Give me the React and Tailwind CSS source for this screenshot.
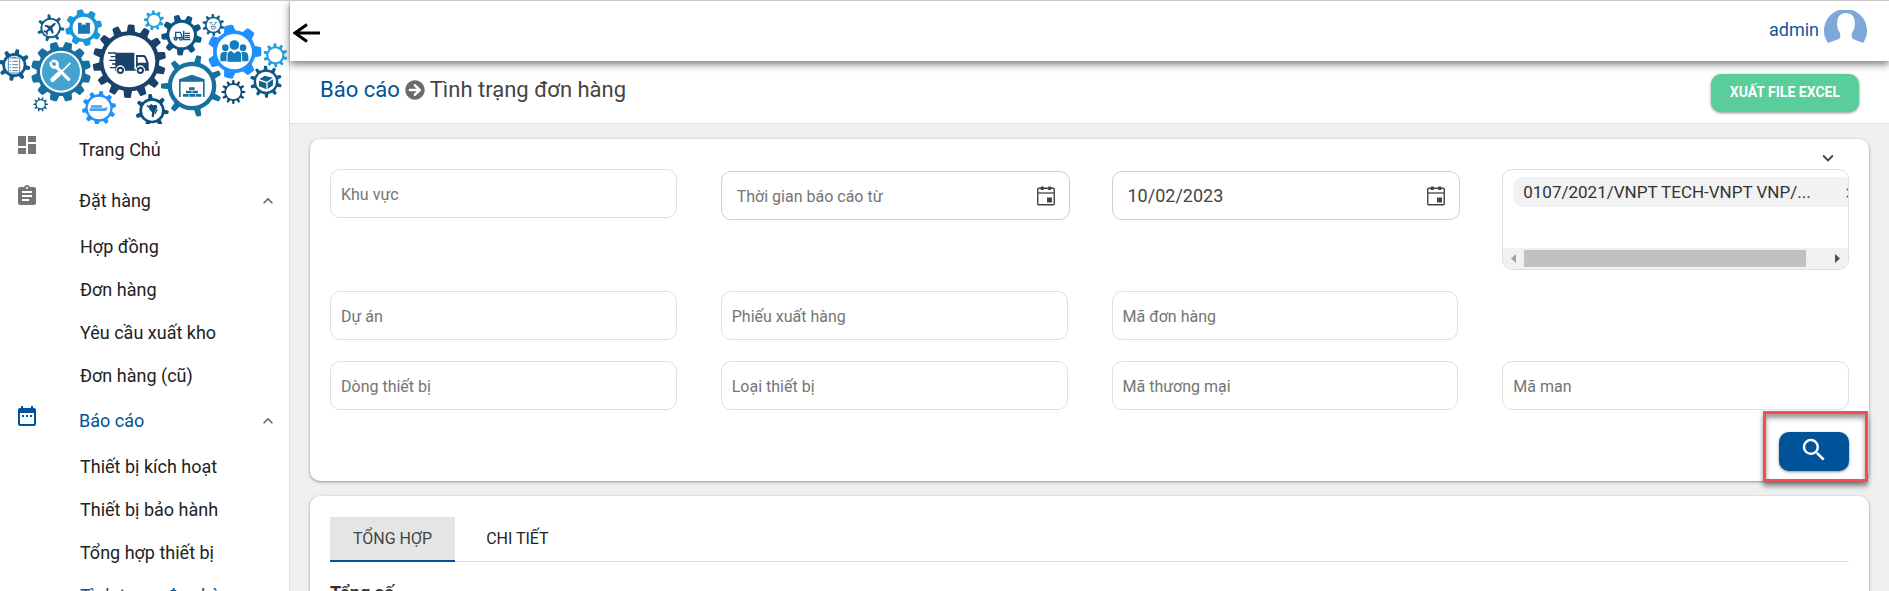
import { MdAssignment, MdClose, MdDashboard, MdDateRange, MdExpandLess, MdExpandMore, MdSearch } from "react-icons/md";
import { FaArrowCircleRight } from "react-icons/fa";

/* cx, cy, outer radius, ring radius, hole radius, teeth, phase in degrees, tooth width, colour */
const GEARS = [
  [43, 195, 48, 36, 28, 8, -78, 12, "#0e5a8a"],
  [152, 84, 41, 31, 25, 7, -98, 9, "#10628f"],
  [251, 83, 55, 43, 33, 8, -103, 20, "#1798dc"],
  [183, 215, 90, 73, 63, 12, 15, 24, "#17709f"],
  [122, 313, 22, 16, 12, 10, 0, 5, "#0f5a85"],
  [388, 184, 110, 90, 78, 14, -87, 22, "#1a416a"],
  [297, 324, 51, 41, 34, 10, -82, 13, "#1e90ff"],
  [462, 61, 30, 22, 17, 9, -95, 9, "#2a9fdc"],
  [545, 105, 61, 46, 37, 9, -105, 18, "#0b5583"],
  [640, 75, 33, 25, 20, 10, -93, 8, "#14618d"],
  [703, 155, 81, 64, 53, 7, 0, 30, "#1e90ff"],
  [826, 166, 36, 27, 21, 10, -92, 9, "#2a9fdc"],
  [576, 258, 93, 73, 60, 7, 180, 17, "#17709f"],
  [700, 276, 36, 27, 22, 12, -90, 7, "#0f4a75"],
  [798, 245, 48, 37, 30, 10, -92, 10, "#0e5a85"],
  [456, 332, 50, 38, 30, 7, -97, 12, "#0b4f7c"],
];

function Gear({ spec }) {
  const [cx, cy, outer, ring, hole, teeth, phase, width, color] = spec;
  return (
    <g transform={`translate(${cx} ${cy})`} fill={color}>
      {Array.from({ length: teeth }, (_, i) => (
        <path
          key={i}
          transform={`rotate(${phase + (i * 360) / teeth})`}
          d={`M${hole + 2} ${-width * 0.62}L${outer - 3} ${-width * 0.46}Q${outer} ${-width * 0.44} ${outer} ${-width * 0.25}V${width * 0.25}Q${outer} ${width * 0.44} ${outer - 3} ${width * 0.46}L${hole + 2} ${width * 0.62}Z`}
        />
      ))}
      <circle r={ring} />
      <circle r={hole} fill="#fff" />
    </g>
  );
}

function Logo() {
  return (
    <svg viewBox="0 3 867 369" className="block w-full" role="img" aria-label="Logistics">
      {GEARS.map((spec, i) => (
        <Gear key={i} spec={spec} />
      ))}
      {/* clipboard */}
      <g fill="none" stroke="#4b86aa" strokeWidth="3">
        <rect x="25" y="174" width="34" height="45" rx="3" />
        <path d="M36 172h12M37 184h17M37 194h17M37 203h17M37 212h17M29 184h4M29 194h4M29 203h4M29 212h4" />
      </g>
      {/* plane */}
      <path d="M167 70q-4-3-9 2l-6 6-15-4-4 4 12 7-6 7-6-1-3 3 7 4 4 7 3-3-1-6 7-6 7 12 4-4-4-15 6-6q5-5 4-7z" fill="#17517a" />
      {/* box */}
      <path d="M234 68h11v8l6-3 6 3v-8h13v33h-36z" fill="#1778b5" />
      {/* wrench and screwdriver */}
      <circle cx="183" cy="215" r="57" fill="#45a3d0" />
      <g stroke="#fff" strokeLinecap="round" fill="none">
        <path d="M168 200l38 38" strokeWidth="10" />
        <path d="M158 183q18-2 14 18-18 6-20-12" strokeWidth="8" />
        <path d="M210 190l-28 28" strokeWidth="5" />
        <path d="M176 222l-18 17" strokeWidth="14" />
      </g>
      {/* truck */}
      <g fill="#1a416a">
        <path d="M346 158h57v50h-57zM408 165h23q5 0 8 6l7 17v22h-38zM345 208h102v4H345z" />
        <path d="M413 171h15q4 0 6 4l5 13h-26z" fill="#fff" />
        <path d="M324 157h24v4h-24zM332 168h18v4h-18zM328 179h22v4h-22zM336 190h14v4h-14zM330 201h18v4h-18z" />
        <circle cx="361" cy="210" r="14" fill="#fff" />
        <circle cx="421" cy="210" r="14" fill="#fff" />
        <circle cx="361" cy="211" r="11" />
        <circle cx="421" cy="211" r="11" />
        <circle cx="361" cy="211" r="5" fill="#fff" />
        <circle cx="421" cy="211" r="5" fill="#fff" />
      </g>
      {/* ship */}
      <path d="M268 325h40l16-4-6 12h-48zM273 316h33v7h-33z" fill="#4aa0ea" />
      {/* forklift */}
      <g fill="none" stroke="#0f5482" strokeWidth="4">
        <path d="M527 112V97h14l6 15M521 113h26M551 92v27h20M554 100h16M554 107h16M554 113h16" />
        <circle cx="527" cy="116" r="4" />
        <circle cx="543" cy="116" r="4" />
      </g>
      {/* drone */}
      <path d="M628 68h9M643 68h9M632 70l8 6 8-6M633 80h14l-3 7h-8z" fill="none" stroke="#5d93b3" strokeWidth="3" />
      {/* people */}
      <g fill="#147cbd">
        <circle cx="676" cy="143" r="10" />
        <circle cx="729" cy="143" r="10" />
        <path d="M661 184v-17q0-12 15-12t13 12v17zM717 184v-17q0-12 13-12t15 12v17z" />
        <g stroke="#fff" strokeWidth="3">
          <circle cx="703" cy="135" r="16" />
          <path d="M681 187v-20q0-15 14-15l8 7 8-7q14 0 14 15v20z" />
        </g>
      </g>
      {/* warehouse */}
      <g fill="#17709f">
        <path d="M537 291v-53l39-14 38 14v53h-5v-46h-67v46z" />
        <path d="M567 262h17v8h-17zM558 272h17v8h-17zM577 272h17v8h-17zM549 282h17v8h-17zM568 282h17v8h-17zM587 282h17v8h-17z" />
      </g>
      {/* parcel */}
      <path d="M778 238l16-11 24 6-17 12zM777 242l22 7v19l-22-9zM803 248l16-10v18l-16 11z" fill="#14618d" />
      {/* worker */}
      <path d="M446 318l8-6 5 4 10-2 3 8-8 14-3 16-6-2 1-14-7-6z" fill="#0b4f7c" />
      <path d="M441 316l9 9M464 342l8-14" stroke="#0b4f7c" strokeWidth="4" />
    </svg>
  );
}

function SectionLink({ icon: Icon, label, active, expandable }) {
  const tone = active ? "text-[#005299]" : "text-[#757575]";
  return (
    <a href="#" className="flex h-12 items-center pr-[11px] pl-[15px]">
      <Icon className={`mt-[7px] size-6 shrink-0 self-start ${tone}`} />
      <span className={`ml-10 flex-1 ${active ? "text-[#005299]" : ""}`}>{label}</span>
      {expandable && <MdExpandLess className="size-5 text-[#666]" />}
    </a>
  );
}

function SubLinks({ items, current }) {
  return (
    <ul>
      {items.map((item) => (
        <li key={item}>
          <a href="#" className={`flex h-[43px] items-center pl-20 ${item === current ? "text-[#005299]" : ""}`}>
            {item}
          </a>
        </li>
      ))}
    </ul>
  );
}

function Field({ label }) {
  return (
    <input
      type="text"
      aria-label={label}
      placeholder={label}
      className="h-[49px] w-full min-w-0 self-start rounded-[10px] border border-[#dfdfdf] px-2.5 pt-0.5 text-base text-[#333] outline-none placeholder:text-[#757575]"
    />
  );
}

function CalendarIcon() {
  return (
    <svg viewBox="0 0 18 20" className="h-5 w-[18px]" fill="none" stroke="#444" aria-hidden="true">
      <rect x="0.75" y="2.25" width="16.5" height="16.5" rx="1" strokeWidth="1.4" />
      <path d="M1 7h16" strokeWidth="1.3" />
      <path d="M3.8 2.3h3M11.2 2.3h3" strokeWidth="3.4" />
      <path d="M10 11.5h5v5h-5z" fill="#444" stroke="none" />
    </svg>
  );
}

function DateField({ label, value }) {
  return (
    <div className="mt-0.5 -mr-0.5 flex h-[49px] items-center self-start rounded-[10px] border border-[#cfcfcf] pr-3.5 pl-[15px]">
      <input
        type="text"
        aria-label={label}
        placeholder={label}
        defaultValue={value}
        className="w-full min-w-0 flex-1 text-lg leading-6 text-[#444] outline-none placeholder:text-base placeholder:text-[#757575]"
      />
      <button type="button" aria-label={`${label}: chọn ngày`}>
        <CalendarIcon />
      </button>
    </div>
  );
}

function ContractPicker() {
  return (
    <div className="flex h-[101px] min-w-0 flex-col overflow-hidden rounded-[10px] border border-[#dfdfdf]">
      <div className="flex-1 overflow-hidden pt-[7px] pl-2.5">
        <div className="flex h-[30px] w-[370px] items-center rounded-[10px] bg-[#f2f2f2] px-2.5 pt-0.5 text-[17px] text-[#333]">
          <span className="w-80 shrink-0">0107/2021/VNPT TECH-VNPT VNP/...</span>
          <button type="button" aria-label="Xóa hợp đồng">
            <MdClose className="size-4 text-[#555]" />
          </button>
        </div>
      </div>
      <div className="flex h-[21px] items-center bg-[#f1f1f1]">
        <svg viewBox="0 0 21 17" className="h-[17px] w-[21px]" aria-hidden="true">
          <path d="M13 4v9L8 8.500z" fill="#a3a3a3" />
        </svg>
        <div className="flex-1">
          <div className="h-[17px] w-[93%] bg-[#c1c1c1]" />
        </div>
        <svg viewBox="0 0 21 17" className="h-[17px] w-[21px]" aria-hidden="true">
          <path d="M8 4v9l5-4.500z" fill="#505050" />
        </svg>
      </div>
    </div>
  );
}

export default function App() {
  return (
    <div className="flex h-screen overflow-hidden border-t border-[#c8c8c8] bg-[#efefef] font-[Roboto,sans-serif] text-[#222]">
      <nav className="w-[290px] shrink-0 border-r border-[#dfdfdf] bg-white text-lg leading-6">
        <Logo />
        <div className="mt-0.5 flex flex-col">
          <SectionLink icon={MdDashboard} label="Trang Chủ" />
          <div className="mt-[3px]">
            <SectionLink icon={MdAssignment} label="Đặt hàng" expandable />
            <SubLinks items={["Hợp đồng", "Đơn hàng", "Yêu cầu xuất kho", "Đơn hàng (cũ)"]} />
          </div>
          <SectionLink icon={MdDateRange} label="Báo cáo" active expandable />
          <SubLinks
            items={["Thiết bị kích hoạt", "Thiết bị bảo hành", "Tổng hợp thiết bị", "Tình trạng đơn hàng"]}
            current="Tình trạng đơn hàng"
          />
        </div>
      </nav>

      <main className="flex min-w-0 flex-1 flex-col">
        <header className="relative z-10 flex h-[60px] shrink-0 items-center justify-between bg-white pr-[22px] pl-[3px] shadow-[0_3px_8px_rgba(0,0,0,0.55)]">
          <button type="button" aria-label="Thu gọn menu">
            <svg viewBox="0 0 28 20" className="mt-1 h-5 w-7" fill="none" stroke="#000" strokeWidth="3" aria-hidden="true">
              <path d="M2 10h25M14 1.500L2 10l12 8.500" />
            </svg>
          </button>
          <a href="#" className="mb-2.5 flex items-center gap-[5px] text-lg leading-6 text-[#1059a0]">
            <span className="pt-2">admin</span>
            <svg viewBox="0 0 43 33" className="h-[33px] w-[43px]" aria-hidden="true">
              <path d="M4 33A21.500 21.500 0 1 1 39 33L29 29q-2-2-1-6 3-4 3-9Q31 3 22 3T13 14q0 5 3 9 1 4-1 6z" fill="#80a7da" />
            </svg>
          </a>
        </header>

        <div className="flex h-[63px] shrink-0 items-center justify-between border-b border-[#dfdfdf] bg-white px-[30px]">
          <h1 className="mb-[5px] flex items-center gap-[5px] text-[22px] leading-8 text-[#444]">
            <a href="#" className="text-[#005299]">Báo cáo</a>
            <FaArrowCircleRight className="size-5 text-[#6b6b6b]" />
            Tình trạng đơn hàng
          </h1>
          <button
            type="button"
            className="mt-0.5 h-[38px] rounded-[10px] bg-[#59cd9a] px-[19px] pb-0.5 text-sm font-bold text-white shadow-[0_1px_3px_rgba(0,0,0,0.45)]"
          >
            XUẤT FILE EXCEL
          </button>
        </div>

        <div className="flex flex-col gap-[15px] px-5 pt-[15px]">
          <section className="rounded-[10px] bg-white px-5 pt-[7px] pb-2.5 shadow-[0_1px_3px_rgba(0,0,0,0.4)]">
            <div className="flex h-[23px] justify-end pr-2.5">
              <button type="button" aria-label="Mở rộng bộ lọc" className="flex h-6 items-center">
                <MdExpandMore className="size-[22px] text-[#444]" />
              </button>
            </div>
            <div className="grid grid-cols-4 gap-x-11 gap-y-[21px]">
              <Field label="Khu vực" />
              <DateField label="Thời gian báo cáo từ" />
              <DateField label="Thời gian báo cáo đến" value="10/02/2023" />
              <ContractPicker />
              <Field label="Dự án" />
              <Field label="Phiếu xuất hàng" />
              <Field label="Mã đơn hàng" />
              <div />
              <Field label="Dòng thiết bị" />
              <Field label="Loại thiết bị" />
              <Field label="Mã thương mại" />
              <Field label="Mã man" />
            </div>
            <div className="mt-[22px] flex justify-end">
              <div className="relative">
                <button
                  type="button"
                  aria-label="Tìm kiếm"
                  className="flex h-[39px] w-[70px] justify-center rounded-[10px] bg-[#005299] pt-[3px] text-white shadow-[0_1px_3px_rgba(0,0,0,0.45)]"
                >
                  <MdSearch className="size-[30px]" />
                </button>
                <div className="pointer-events-none absolute -top-[21px] -right-[19px] -bottom-[11px] -left-4 border-[3px] border-[#ff4848] shadow-[0_4px_5px_rgba(0,0,0,0.45),inset_0_4px_5px_rgba(0,0,0,0.4)]" />
              </div>
            </div>
          </section>

          <section className="h-40 rounded-[10px] bg-white px-5 pt-[21px] shadow-[0_1px_3px_rgba(0,0,0,0.4)]">
            <div role="tablist" className="flex gap-2 border-b border-[#dfdfdf] text-base leading-6">
              <button
                type="button"
                role="tab"
                aria-selected="true"
                className="-mb-px h-[45px] border-b-2 border-[#005299] bg-[#e4e6e5] px-[23px] text-[#444]"
              >
                TỔNG HỢP
              </button>
              <button type="button" role="tab" aria-selected="false" className="h-11 px-[23px]">
                CHI TIẾT
              </button>
            </div>
            <h2 className="mt-[17px] text-lg leading-7 font-bold text-[#333]">Tổng số</h2>
          </section>
        </div>
      </main>
    </div>
  );
}
